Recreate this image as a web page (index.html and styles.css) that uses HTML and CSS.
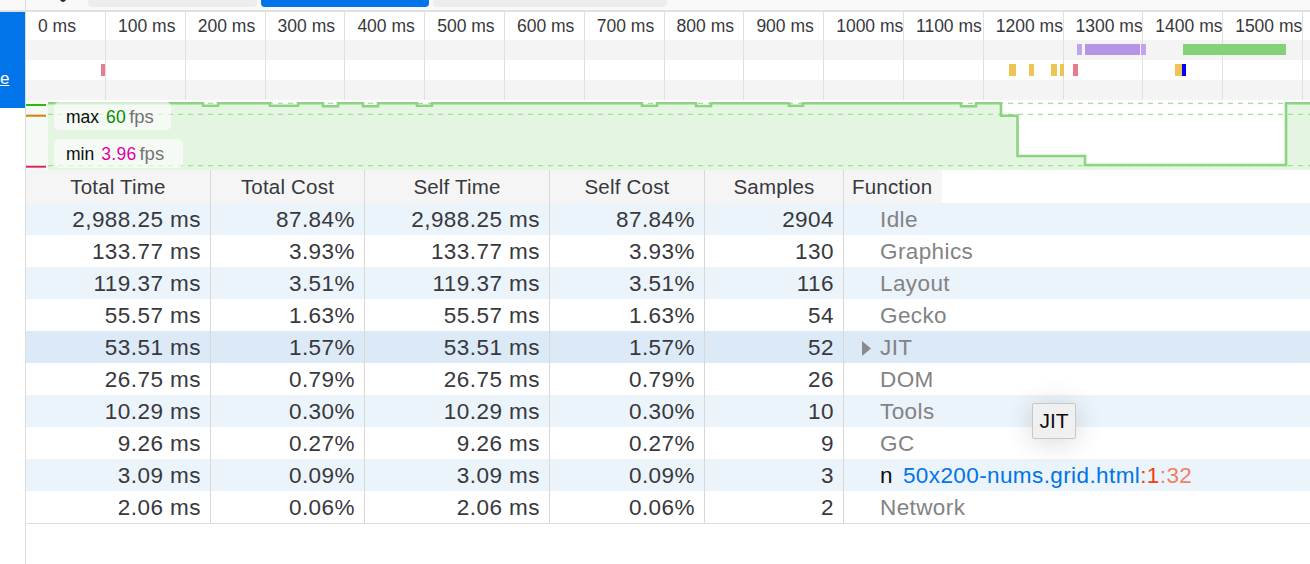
FILE: index.html
```html
<!DOCTYPE html>
<html>
<head>
<meta charset="utf-8">
<title>Performance</title>
<link rel="stylesheet" href="styles.css">
</head>
<body>
<header class="toolbar">
  <div class="toolbar-side"></div>
  <svg class="toolbar-caret" width="6" height="3" viewBox="0 0 6 3"><path d="M0 0 H6 Q3 4 0 0 Z" fill="#2b2b2e"/></svg>
  <span class="tab tab-gray tab-a"></span>
  <span class="tab tab-blue"></span>
  <span class="tab tab-gray tab-b"></span>
</header>
<div class="main">
  <aside class="sidebar">
    <div class="sidebar-blue"><a class="sidebar-link">e</a></div>
  </aside>
  <section class="panel">
    <div class="timeline">
      <div class="ruler">
        <div class="tick">0 ms</div>
        <div class="tick">100 ms</div>
        <div class="tick">200 ms</div>
        <div class="tick">300 ms</div>
        <div class="tick">400 ms</div>
        <div class="tick">500 ms</div>
        <div class="tick">600 ms</div>
        <div class="tick">700 ms</div>
        <div class="tick">800 ms</div>
        <div class="tick">900 ms</div>
        <div class="tick">1000 ms</div>
        <div class="tick">1100 ms</div>
        <div class="tick">1200 ms</div>
        <div class="tick">1300 ms</div>
        <div class="tick">1400 ms</div>
        <div class="tick">1500 ms</div>
        <div class="tick tick-last"></div>
      </div>
      <span class="marker m-purple-soft" style="left:1051px;top:32px;width:5px;height:11px"></span>
      <span class="marker m-purple" style="left:1059px;top:32px;width:55px;height:11px"></span>
      <span class="marker m-purple-soft" style="left:1115px;top:32px;width:5px;height:11px"></span>
      <span class="marker m-green" style="left:1157px;top:32px;width:103px;height:11px"></span>
      <span class="marker m-red" style="left:75px;top:52px;width:4px;height:12px"></span>
      <span class="marker m-yellow" style="left:983px;top:52px;width:7px;height:12px"></span>
      <span class="marker m-yellow" style="left:1003px;top:52px;width:5px;height:12px"></span>
      <span class="marker m-yellow" style="left:1025px;top:52px;width:6px;height:12px"></span>
      <span class="marker m-yellow" style="left:1034px;top:52px;width:4px;height:12px"></span>
      <span class="marker m-red" style="left:1047px;top:52px;width:5px;height:12px"></span>
      <span class="marker m-yellow" style="left:1149px;top:52px;width:7px;height:12px"></span>
      <span class="marker m-blue" style="left:1156px;top:52px;width:4px;height:12px"></span>
    </div>

    <div class="fps">
      <svg class="fps-graph" width="1284" height="70" viewBox="0 0 1284 70">
        <rect x="0" y="0" width="22" height="70" fill="#f6faf5"/>
        <line x1="0" y1="5" x2="20" y2="5" stroke="#2cb80d" stroke-width="2"/>
        <line x1="0" y1="15.7" x2="20" y2="15.7" stroke="#d97e00" stroke-width="2"/>
        <line x1="0" y1="66.7" x2="20" y2="66.7" stroke="#e0245a" stroke-width="2"/>
        <path d="M22,3.3 H177 V5.8 H192 V3.3 H244 V5.8 H272 V3.3 H297 V6.3 H312 V3.3 H337 V6.3 H352 V3.3 H391 V5.8 H406 V3.3 H616 V5.8 H631 V3.3 H670 V6 H685 V3.3 H763 V5.8 H777 V3.3 H935 V6.3 H950 V3.3 H975 V15.7 H991.5 V56 H1059 V65 H1260 V3.3 H1284 V70 H22 Z" fill="#e4f5e1"/>
        <g stroke="#a3de9a" stroke-width="1.3" stroke-dasharray="5 5">
          <line x1="22" y1="3.3" x2="1284" y2="3.3"/>
          <line x1="22" y1="14.3" x2="1284" y2="14.3"/>
          <line x1="22" y1="65.7" x2="1284" y2="65.7"/>
        </g>
        <path d="M22,3.3 H177 V5.8 H192 V3.3 H244 V5.8 H272 V3.3 H297 V6.3 H312 V3.3 H337 V6.3 H352 V3.3 H391 V5.8 H406 V3.3 H616 V5.8 H631 V3.3 H670 V6 H685 V3.3 H763 V5.8 H777 V3.3 H935 V6.3 H950 V3.3 H975 V15.7 H991.5 V56 H1059 V65 H1260 V3.3 H1284" fill="none" stroke="#8bd481" stroke-width="2.6"/>
      </svg>
      <div class="fps-box fps-max"><span class="fps-key">max</span><span class="fps-val fps-val-max">60</span><span class="fps-unit">fps</span></div>
      <div class="fps-box fps-min"><span class="fps-key">min</span><span class="fps-val fps-val-min">3.96</span><span class="fps-unit">fps</span></div>
    </div>

    <div class="tree">
      <div class="tree-head">
        <div class="hcell">Total Time</div>
        <div class="hcell">Total Cost</div>
        <div class="hcell">Self Time</div>
        <div class="hcell">Self Cost</div>
        <div class="hcell">Samples</div>
        <div class="hfunc"><span class="hfunc-label">Function</span></div>
      </div>

      <div class="row row-alt">
        <div class="cell">2,988.25 ms</div><div class="cell">87.84%</div><div class="cell">2,988.25 ms</div><div class="cell">87.84%</div><div class="cell">2904</div>
        <div class="fcell"><span class="twisty"></span><span class="cat">Idle</span></div>
      </div>
      <div class="row">
        <div class="cell">133.77 ms</div><div class="cell">3.93%</div><div class="cell">133.77 ms</div><div class="cell">3.93%</div><div class="cell">130</div>
        <div class="fcell"><span class="twisty"></span><span class="cat">Graphics</span></div>
      </div>
      <div class="row row-alt">
        <div class="cell">119.37 ms</div><div class="cell">3.51%</div><div class="cell">119.37 ms</div><div class="cell">3.51%</div><div class="cell">116</div>
        <div class="fcell"><span class="twisty"></span><span class="cat">Layout</span></div>
      </div>
      <div class="row">
        <div class="cell">55.57 ms</div><div class="cell">1.63%</div><div class="cell">55.57 ms</div><div class="cell">1.63%</div><div class="cell">54</div>
        <div class="fcell"><span class="twisty"></span><span class="cat">Gecko</span></div>
      </div>
      <div class="row row-selected">
        <div class="cell">53.51 ms</div><div class="cell">1.57%</div><div class="cell">53.51 ms</div><div class="cell">1.57%</div><div class="cell">52</div>
        <div class="fcell"><span class="twisty"><svg width="9" height="15" viewBox="0 0 9 15"><path d="M0 0 L9 7.5 L0 15 Z" fill="#8a8a8a"/></svg></span><span class="cat">JIT</span></div>
      </div>
      <div class="row">
        <div class="cell">26.75 ms</div><div class="cell">0.79%</div><div class="cell">26.75 ms</div><div class="cell">0.79%</div><div class="cell">26</div>
        <div class="fcell"><span class="twisty"></span><span class="cat">DOM</span></div>
      </div>
      <div class="row row-alt">
        <div class="cell">10.29 ms</div><div class="cell">0.30%</div><div class="cell">10.29 ms</div><div class="cell">0.30%</div><div class="cell">10</div>
        <div class="fcell"><span class="twisty"></span><span class="cat">Tools</span></div>
      </div>
      <div class="row">
        <div class="cell">9.26 ms</div><div class="cell">0.27%</div><div class="cell">9.26 ms</div><div class="cell">0.27%</div><div class="cell">9</div>
        <div class="fcell"><span class="twisty"></span><span class="cat">GC</span></div>
      </div>
      <div class="row row-alt">
        <div class="cell">3.09 ms</div><div class="cell">0.09%</div><div class="cell">3.09 ms</div><div class="cell">0.09%</div><div class="cell">3</div>
        <div class="fcell"><span class="twisty"></span><span class="fname">n</span><span class="furl">50x200-nums.grid.html</span><span class="fline">:1</span><span class="fcol">:32</span></div>
      </div>
      <div class="row">
        <div class="cell">2.06 ms</div><div class="cell">0.06%</div><div class="cell">2.06 ms</div><div class="cell">0.06%</div><div class="cell">2</div>
        <div class="fcell"><span class="twisty"></span><span class="cat">Network</span></div>
      </div>
    </div>
  </section>
</div>
<div class="tooltip">JIT</div>
</body>
</html>
```

FILE: styles.css
```css
html, body {
  margin: 0;
  padding: 0;
}

body {
  width: 1310px;
  height: 564px;
  overflow: hidden;
  position: relative;
  background: #ffffff;
  color: #38383d;
  font-family: "Liberation Sans", Arial, sans-serif;
}

/* ---------- top toolbar ---------- */
.toolbar {
  display: flex;
  align-items: flex-start;
  height: 10px;
  background: #f9f9fa;
  border-bottom: 2px solid #e0e0e2;
}

.toolbar-side {
  width: 25px;
  height: 10px;
  border-right: 1px solid #dcdcdc;
}

.toolbar-caret {
  display: block;
  margin-left: 34px;
}

.tab {
  display: block;
  height: 7px;
  border-radius: 0 0 4px 4px;
}

.tab-gray {
  background: #ededf0;
}

.tab-blue {
  background: #0074e8;
  width: 168px;
  margin-left: 4px;
}

.tab-a {
  width: 169px;
  margin-left: 22px;
}

.tab-b {
  width: 234px;
  margin-left: 4px;
}

/* ---------- main layout ---------- */
.main {
  display: flex;
  height: 552px;
}

.sidebar {
  width: 25px;
  flex: none;
  border-right: 1px solid #dcdcdc;
}

.sidebar-blue {
  height: 96px;
  background: #0074e8;
  overflow: hidden;
  padding: 57px 0 0 0;
  box-sizing: border-box;
}

.sidebar-link {
  display: inline-block;
  color: #ffffff;
  font-size: 17px;
  line-height: 20px;
  text-decoration: underline;
  white-space: nowrap;
}

.panel {
  width: 1284px;
  flex: none;
}

/* ---------- timeline ruler + markers ---------- */
.timeline {
  position: relative;
  height: 88px;
  background: linear-gradient(to bottom,
    #ffffff 0, #ffffff 28px,
    #f4f4f4 28px, #f4f4f4 48px,
    #ffffff 48px, #ffffff 68px,
    #f4f4f4 68px, #f4f4f4 88px);
}

.ruler {
  display: grid;
  grid-template-columns: 80px repeat(15, 79.8px) 1fr;
  height: 88px;
}

.tick {
  box-sizing: border-box;
  border-right: 1px solid #e0e0e0;
  padding-left: 12px;
  font-size: 17.5px;
  line-height: 28px;
  color: #38383d;
  white-space: nowrap;
  overflow: hidden;
}

.tick-last {
  border-right: none;
}

.marker {
  position: absolute;
  display: block;
}

.m-purple { background: #b594e8; }
.m-purple-soft { background: #c0a4ed; }
.m-green { background: #84d179; }
.m-red { background: #e97c8c; }
.m-yellow { background: #efc454; }
.m-blue { background: #0000ff; }

/* ---------- fps graph ---------- */
.fps {
  position: relative;
  height: 70px;
}

.fps-graph {
  display: block;
}

.fps-box {
  position: absolute;
  left: 28px;
  box-sizing: border-box;
  background: rgba(255, 255, 255, 0.62);
  border-radius: 5px;
  padding-left: 12px;
  font-size: 17.5px;
  white-space: nowrap;
}

.fps-max {
  top: 2px;
  width: 117px;
  height: 28px;
  line-height: 30px;
}

.fps-min {
  top: 39px;
  width: 129px;
  height: 29px;
  line-height: 30px;
}

.fps-key {
  color: #0c0c0d;
  margin-right: 7px;
}

.fps-val {
  margin-right: 3px;
  letter-spacing: 0.3px;
}

.fps-val-max { color: #058b00; }
.fps-val-min { color: #dd00a9; }

.fps-unit {
  color: #737373;
  font-size: 18.5px;
}

/* ---------- call tree ---------- */
.tree {
  border-bottom: 1px solid #dcdcdc;
}

.tree-head,
.row {
  display: grid;
  grid-template-columns: 185px 154px 185px 155px 139px 1fr;
}

.tree-head {
  height: 33px;
}

.hcell {
  box-sizing: border-box;
  background: #f5f5f5;
  border-right: 1px solid #d8d8d8;
  text-align: center;
  font-size: 20.5px;
  letter-spacing: 0.2px;
  line-height: 33px;
  color: #38383d;
  white-space: nowrap;
}

.hfunc {
  display: flex;
}

.hfunc-label {
  background: #f5f5f5;
  padding: 0 10px 0 8px;
  font-size: 20.5px;
  letter-spacing: 0.2px;
  line-height: 33px;
  color: #38383d;
}

.row {
  height: 32px;
  background: #ffffff;
}

.row-alt {
  background: #ebf3fb;
}

.row-selected {
  background: #dce9f6;
}

.cell {
  box-sizing: border-box;
  border-right: 1px solid #d8d8d8;
  text-align: right;
  padding: 1px 9px 0 0;
  font-size: 22.5px;
  letter-spacing: 0.45px;
  line-height: 32px;
  color: #38383d;
  white-space: nowrap;
}

.fcell {
  display: flex;
  align-items: center;
  padding: 1px 0 0 18px;
  box-sizing: border-box;
  font-size: 22.5px;
  letter-spacing: 0.4px;
  line-height: 32px;
  white-space: nowrap;
}

.twisty {
  display: flex;
  align-items: center;
  width: 18px;
  height: 31px;
  flex: none;
}

.cat {
  color: #838383;
}

.fname {
  color: #0c0c0d;
  margin-right: 10px;
}

.furl {
  color: #0074e8;
}

.fline {
  color: #ef3e0a;
}

.fcol {
  color: #f2805f;
}

/* ---------- tooltip ---------- */
.tooltip {
  position: absolute;
  left: 1032px;
  top: 403px;
  width: 44px;
  height: 36px;
  box-sizing: border-box;
  background: #f0f0f0;
  border: 1px solid #c8c8c8;
  border-radius: 2px;
  box-shadow: 0 3px 28px rgba(0, 0, 0, 0.16);
  font-size: 21px;
  line-height: 34px;
  text-align: center;
  color: #0c0c0d;
}
```
